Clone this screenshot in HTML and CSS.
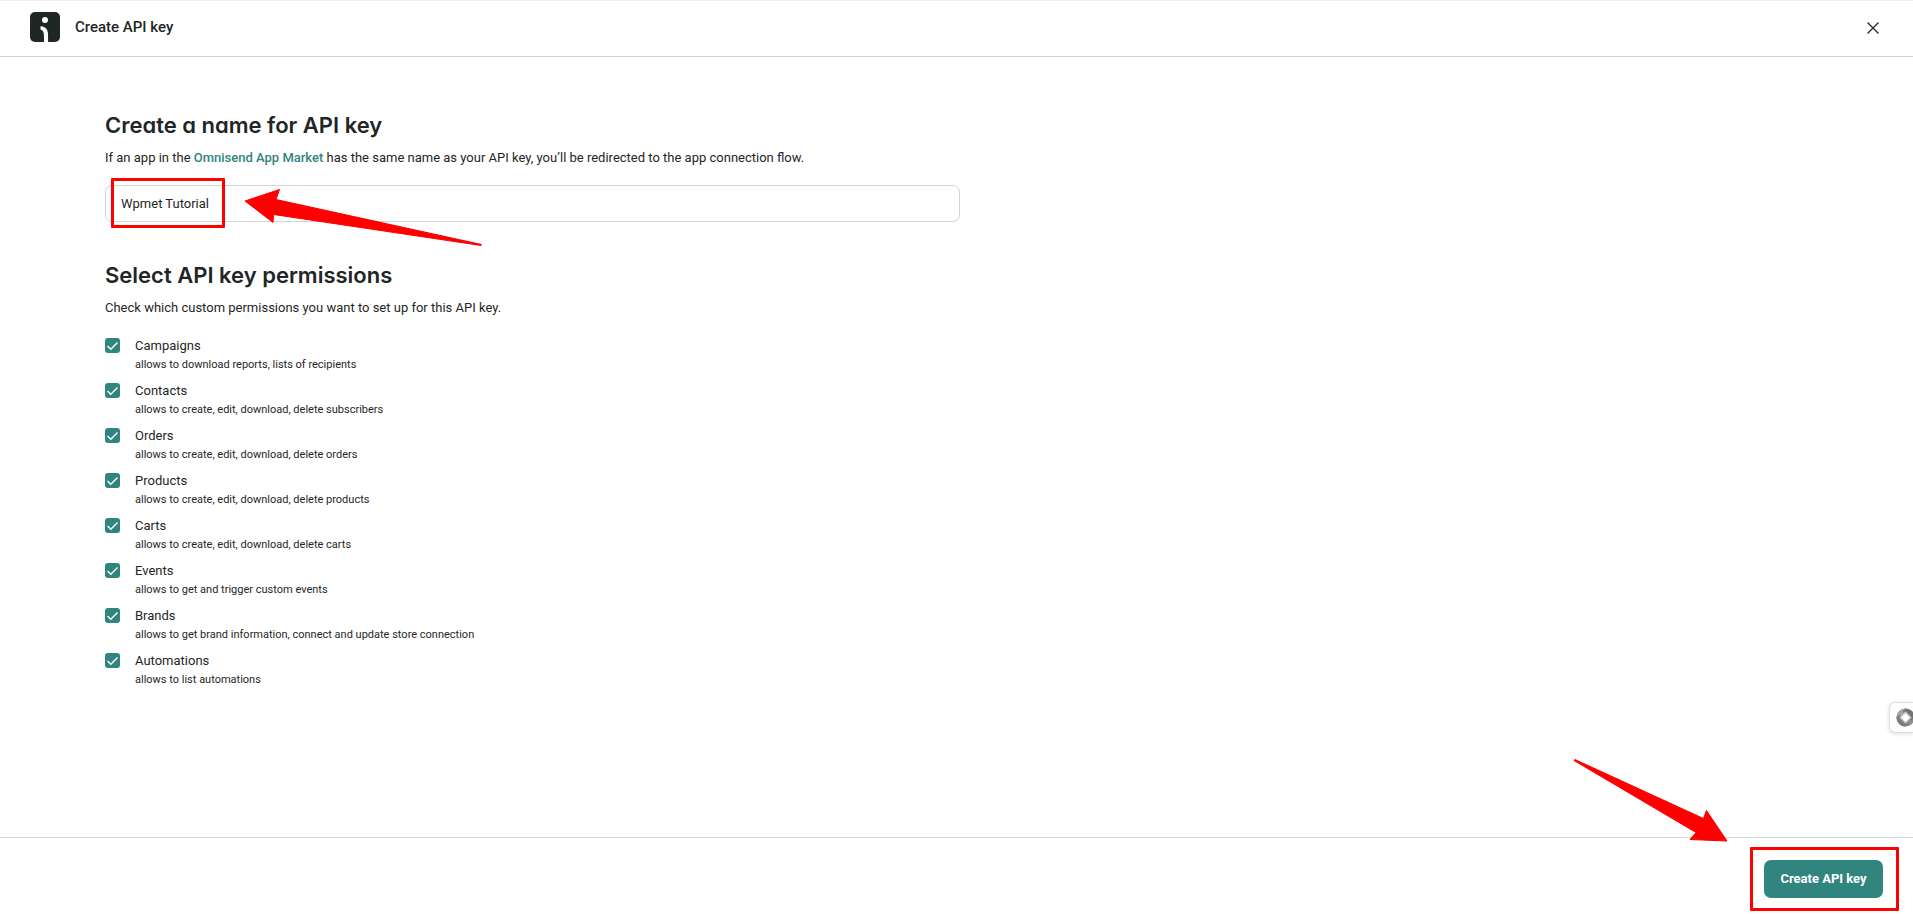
FILE: index.html
```html
<!DOCTYPE html>
<html lang="en">
<head>
<meta charset="utf-8">
<title>Create API key</title>
<link rel="stylesheet" href="styles.css">
</head>
<body>
<header class="topbar">
  <svg class="logo" viewBox="0 0 30 30" aria-hidden="true">
    <rect width="30" height="30" rx="5" fill="#1f2626"/>
    <circle cx="15" cy="8" r="3" fill="#fff"/>
    <path d="M10.500 14.200c4.500.2 7.200 2.600 7.500 7.300.1 2.500.1 5 .1 8.500h-4.100c0-3 .1-5.500-.2-8-.3-2.500-1.300-4-3.300-4.500z" fill="#fff"/>
  </svg>
  <h1 class="topbar-title">Create API key</h1>
  <button class="close" type="button" aria-label="Close">
    <svg viewBox="0 0 14 14" aria-hidden="true"><path d="M1.500 1.500l11 11M12.500 1.500l-11 11" stroke="#262c2c" stroke-width="1.400" fill="none"/></svg>
  </button>
</header>

<main class="content">
  <section class="section">
    <h2 class="heading"><label for="key-name">Create a name for API key</label></h2>
    <p class="lead">If an app in the <a class="link" href="#">Omnisend App Market</a> has the same name as your API key, you’ll be redirected to the app connection flow.</p>
    <div class="field">
      <input class="input" id="key-name" type="text" value="Wpmet Tutorial">
      <span class="mark mark-input"></span>
      <svg class="arrow arrow-input" viewBox="0 0 240 60" aria-hidden="true">
        <path d="M1 16L35.500 4.500L32 14.500L237.500 59.500L237 60.500L29.500 29.500L29 37.500Z"/>
      </svg>
    </div>
  </section>

  <section class="section">
    <h2 class="heading">Select API key permissions</h2>
    <p class="lead">Check which custom permissions you want to set up for this API key.</p>
    <ul class="permissions">
      <li><label class="permission"><input class="check" type="checkbox" checked><span class="name">Campaigns</span><span class="note">allows to download reports, lists of recipients</span></label></li>
      <li><label class="permission"><input class="check" type="checkbox" checked><span class="name">Contacts</span><span class="note">allows to create, edit, download, delete subscribers</span></label></li>
      <li><label class="permission"><input class="check" type="checkbox" checked><span class="name">Orders</span><span class="note">allows to create, edit, download, delete orders</span></label></li>
      <li><label class="permission"><input class="check" type="checkbox" checked><span class="name">Products</span><span class="note">allows to create, edit, download, delete products</span></label></li>
      <li><label class="permission"><input class="check" type="checkbox" checked><span class="name">Carts</span><span class="note">allows to create, edit, download, delete carts</span></label></li>
      <li><label class="permission"><input class="check" type="checkbox" checked><span class="name">Events</span><span class="note">allows to get and trigger custom events</span></label></li>
      <li><label class="permission"><input class="check" type="checkbox" checked><span class="name">Brands</span><span class="note">allows to get brand information, connect and update store connection</span></label></li>
      <li><label class="permission"><input class="check" type="checkbox" checked><span class="name">Automations</span><span class="note">allows to list automations</span></label></li>
    </ul>
  </section>
</main>

<footer class="footer">
  <div class="action">
    <button class="submit" type="submit">Create API key</button>
    <span class="mark mark-submit"></span>
    <svg class="arrow arrow-submit" viewBox="0 0 156 84" aria-hidden="true">
      <path d="M1 1.500L2 .5L130.500 59.500L133.500 51.500L154 82L117 80.500L123 73.500Z"/>
    </svg>
  </div>
</footer>

<button class="widget" type="button" aria-label="Open assistant">
  <svg viewBox="0 0 20 20" aria-hidden="true">
    <circle cx="10" cy="10" r="9.500" fill="#8c8c8c"/>
    <path d="M.5 10A9.500 9.500 0 0 1 10 .5L14 3L4 12Z" fill="#a5a5a5"/>
    <path d="M10 .5A9.500 9.500 0 0 1 19.500 10L16 13L7 4Z" fill="#737373"/>
    <path d="M.5 10L4 7l9 9-3 3.500A9.500 9.500 0 0 1 .5 10z" fill="#7b7b7b"/>
    <path d="M10 3.500L16.500 10 10 16.500 3.500 10z" fill="#c9c9c9"/>
    <path d="M10 5.500l4.500 4.500-4.500 4.500-4.500-4.500z" fill="#fff"/>
  </svg>
</button>
</body>
</html>
```

FILE: styles.css
```css
* {
  box-sizing: border-box;
}

body {
  display: flex;
  flex-direction: column;
  min-height: 100vh;
  margin: 0;
  overflow-x: hidden;
  background: #fff;
  color: #1f2626;
  font: 13px/20px Roboto, "Liberation Sans", sans-serif;
}

.topbar {
  display: flex;
  align-items: center;
  gap: 15px;
  height: 57px;
  padding: 0 31px 3px 30px;
  border-top: 1px solid #f1f1f1;
  border-bottom: 1px solid #cdd6d6;
}

.logo {
  width: 30px;
  height: 30px;
}

.topbar-title {
  margin: 0;
  font-size: 15px;
  font-weight: 500;
}

.close {
  display: flex;
  margin: 2px 0 0 auto;
  padding: 2px;
  border: 0;
  background: none;
}

.close svg {
  width: 14px;
  height: 14px;
}

.content {
  flex: 1;
  padding: 52px 105px 24px;
}

.section {
  max-width: 855px;
  margin-bottom: 37px;
}

.heading {
  margin: 0;
  font: 600 22px/32px Inter, "Liberation Sans", sans-serif;
  font-feature-settings: "cv11";
}

.lead {
  margin: 7px 0 17px;
}

.link {
  color: #30857f;
  font-weight: 500;
  text-decoration: none;
}

.field {
  position: relative;
}

.input {
  display: block;
  width: 100%;
  height: 37px;
  padding: 0 15px;
  border: 1px solid #cdd6d6;
  border-radius: 7px;
  background: #fff;
  color: inherit;
  font: inherit;
}

.permissions {
  display: grid;
  gap: 7px;
  margin: 18px 0 0;
  padding: 0;
  list-style: none;
}

.permission {
  display: grid;
  grid-template-columns: 15px 1fr;
  align-items: start;
  column-gap: 15px;
}

.check {
  width: 15px;
  height: 15px;
  margin: 2px 0 0;
  appearance: none;
  border-radius: 3px;
  background: #30857f url("data:image/svg+xml,%3Csvg xmlns='http://www.w3.org/2000/svg' viewBox='0 0 15 15'%3E%3Cpath d='M2.500 8l3.300 3.200 6.700-6.700' fill='none' stroke='white' stroke-width='1.400'/%3E%3C/svg%3E");
}

.note {
  grid-column: 2;
  font-size: 11px;
  line-height: 18px;
}

.footer {
  display: flex;
  justify-content: flex-end;
  padding: 22px 30px 16px;
  border-top: 1px solid #cdd6d6;
}

.action {
  position: relative;
}

.submit {
  display: block;
  min-width: 119px;
  height: 38px;
  padding: 0 16px;
  border: 0;
  border-radius: 7px;
  background: #30857f;
  color: #fff;
  font: 700 13px/20px Roboto, "Liberation Sans", sans-serif;
}

.mark {
  position: absolute;
  border: 3px solid #f00;
  border-radius: 1px;
  pointer-events: none;
}

.mark-input {
  top: -7px;
  left: 6px;
  width: 114px;
  height: 50px;
}

.mark-submit {
  inset: -13px -16px -13px -14px;
}

.arrow {
  position: absolute;
  overflow: visible;
  fill: #f00;
  stroke: #f00;
  stroke-linejoin: round;
  pointer-events: none;
}

.arrow-input {
  top: 0;
  left: 139px;
  width: 240px;
  height: 60px;
}

.arrow-submit {
  right: 154px;
  bottom: 55px;
  width: 156px;
  height: 84px;
}

.widget {
  display: flex;
  align-items: center;
  position: fixed;
  right: 0;
  bottom: 181px;
  width: 24px;
  height: 31px;
  padding: 0 0 0 6px;
  overflow: hidden;
  border: 1px solid #dedede;
  border-right: 0;
  border-radius: 6px 0 0 6px;
  background: #fff;
  box-shadow: 0 1px 4px #0002;
}

.widget svg {
  flex: none;
  width: 19px;
  height: 19px;
}
```
